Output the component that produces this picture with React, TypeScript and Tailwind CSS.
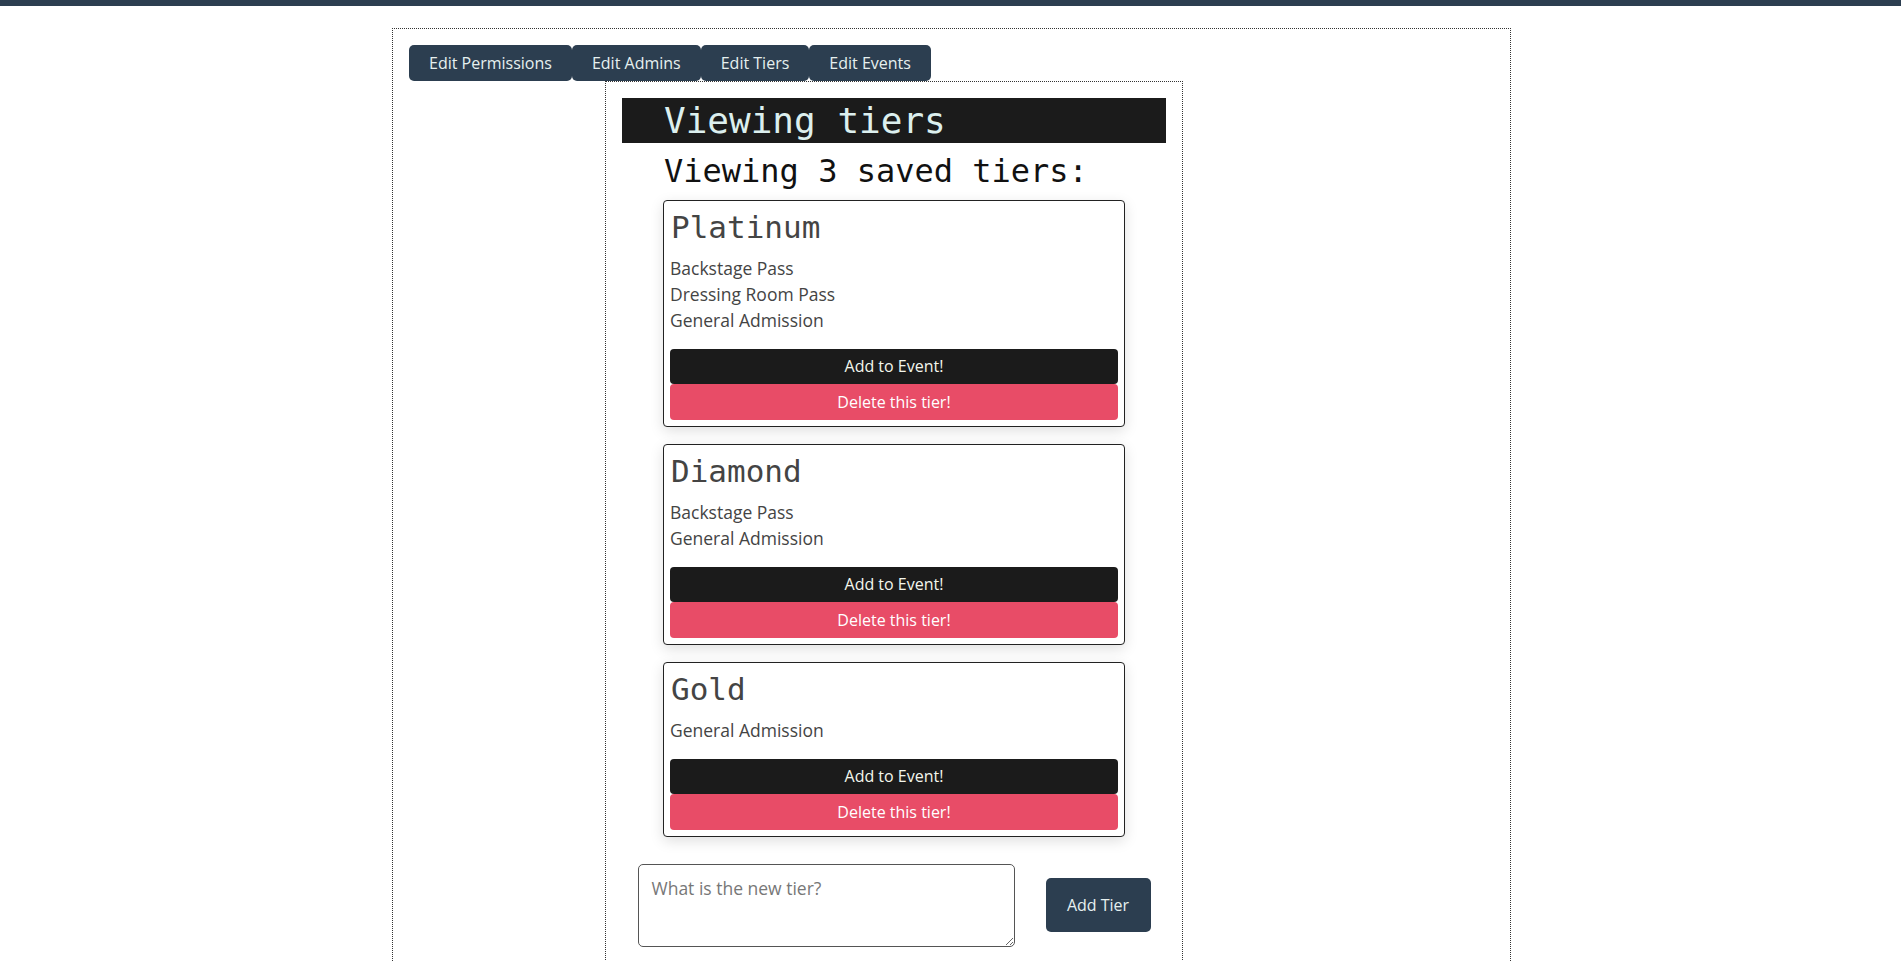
import { useState } from "react";

const tabs = ["Edit Permissions", "Edit Admins", "Edit Tiers", "Edit Events"];

const initialTiers = [
  { name: "Platinum", perks: ["Backstage Pass", "Dressing Room Pass", "General Admission"] },
  { name: "Diamond", perks: ["Backstage Pass", "General Admission"] },
  { name: "Gold", perks: ["General Admission"] },
];

function TierCard({ tier, onDelete }: any) {
  return (
    <div className="w-[462px] mx-auto border border-[#222] rounded-[4px] bg-white px-[6px] pt-[7px] pb-[6px] shadow-[0_4px_14px_rgba(0,0,0,0.13)]">
      <h3 className="font-['DejaVu_Sans_Mono',monospace] text-[31px] leading-[38px] text-[#444] pl-[1px]">
        {tier.name}
      </h3>
      <ul className="mt-[9px] mb-[16px]">
        {tier.perks.map((perk: string) => (
          <li key={perk} className="text-[17.5px] leading-[26px] text-[#444]">
            {perk}
          </li>
        ))}
      </ul>
      <button className="block w-full h-[35.5px] rounded-[4px] bg-[#1b1b1b] text-[#f3f6ec] text-[16px]">
        Add to Event!
      </button>
      <button
        onClick={onDelete}
        className="block w-full h-[35.5px] rounded-[4px] bg-[#e84c67] text-white text-[16px]"
      >
        Delete this tier!
      </button>
    </div>
  );
}

export default function App() {
  const [tiers, setTiers] = useState(initialTiers);
  const [newTier, setNewTier] = useState("");

  const addTier = () => {
    if (!newTier.trim()) return;
    setTiers([...tiers, { name: newTier.trim(), perks: [] }]);
    setNewTier("");
  };

  return (
    <div className="min-h-[961px] bg-white font-['Open_Sans',sans-serif]">
      <div className="h-[6px] bg-[#2c3e50]" />

      <div className="w-[1119px] ml-[392px] mt-[22px] border border-dotted border-[#333] px-4 pt-4 pb-8">
        {/* Tabs */}
        <div className="flex">
          {tabs.map((tab) => (
            <button
              key={tab}
              className="h-[36px] px-[20px] rounded-[5px] bg-[#2c3e50] text-[#e6f0ef] text-[16px]"
            >
              {tab}
            </button>
          ))}
        </div>

        {/* Tier panel */}
        <div className="w-[578px] ml-[196px] border border-dotted border-[#333] p-4 pb-10">
          <h1 className="h-[45px] bg-[#1b1b1b] pl-[42px] font-['DejaVu_Sans_Mono',monospace] text-[36px] leading-[45px] text-[#dcefee]">
            Viewing tiers
          </h1>
          <h2 className="mt-[8.5px] pl-[42px] font-['DejaVu_Sans_Mono',monospace] text-[32px] leading-[38px] text-[#111]">
            Viewing {tiers.length} saved tiers:
          </h2>

          <div className="mt-[10px] flex flex-col gap-[17px]">
            {tiers.map((tier, i) => (
              <TierCard
                key={tier.name + i}
                tier={tier}
                onDelete={() => setTiers(tiers.filter((_, j) => j !== i))}
              />
            ))}
          </div>

          <div className="mt-[27px] flex items-center justify-center gap-[31px]">
            <textarea
              value={newTier}
              onChange={(e) => setNewTier(e.target.value)}
              placeholder="What is the new tier?"
              className="w-[377px] h-[83px] border border-[#555] rounded-[5px] px-[13px] py-[10px] text-[17.5px] leading-[26px] text-[#333] placeholder:text-[#777] outline-none"
            />
            <button
              onClick={addTier}
              className="w-[105px] h-[54px] rounded-[5px] bg-[#2c3e50] text-[#e6f0ef] text-[16px]"
            >
              Add Tier
            </button>
          </div>
        </div>
      </div>
    </div>
  );
}
